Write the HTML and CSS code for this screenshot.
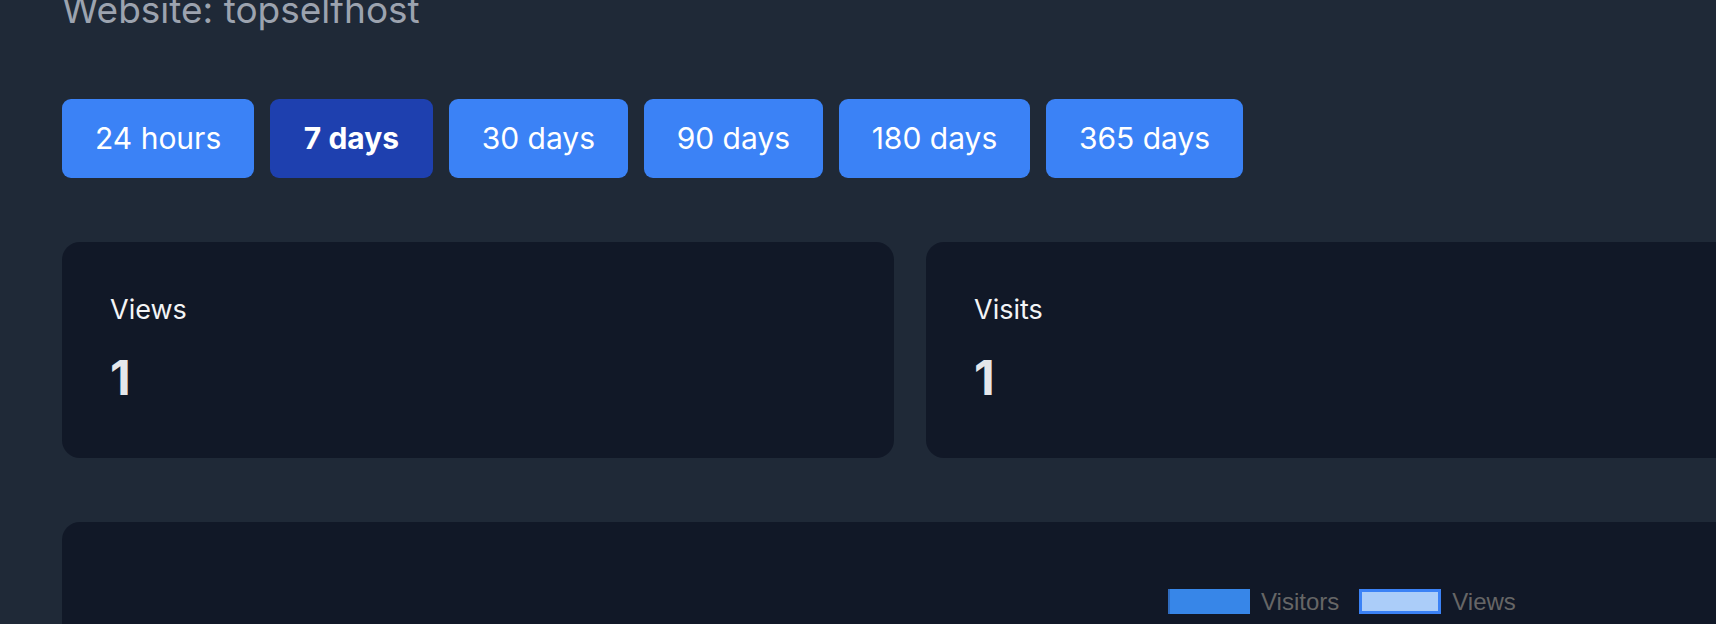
FILE: index.html
```html
<!DOCTYPE html>
<html>
<head>
<meta http-equiv="Content-Type" content="text/html; charset=utf-8">
<title>topselfhost - stats</title>
<link rel="stylesheet" href="styles.css">
</head>
<body>
<div id="page">
  <h1 class="site-title">Website: topselfhost</h1>

  <div class="ranges">
    <button class="range">24 hours</button>
    <button class="range active">7 days</button>
    <button class="range">30 days</button>
    <button class="range">90 days</button>
    <button class="range">180 days</button>
    <button class="range">365 days</button>
  </div>

  <div class="totals">
    <div class="card stat">
      <div class="stat-label">Views</div>
      <div class="stat-value">1</div>
    </div>
    <div class="card stat">
      <div class="stat-label">Visits</div>
      <div class="stat-value">1</div>
    </div>
  </div>

  <div class="card chart">
    <div class="legend">
      <span class="swatch visitors"></span><span class="legend-text">Visitors</span>
      <span class="swatch views"></span><span class="legend-text">Views</span>
    </div>
  </div>
</div>
</body>
</html>
```

FILE: styles.css
```css
html, body { overflow: hidden; }
body {
  margin: 0;
  background-color: #1f2937;
  font-family: Inter, "Noto Sans", sans-serif;
  color: #f3f4f6;
}
#page {
  width: 1696px;
  padding-left: 62px;
}

.site-title {
  margin: -14px 0 0 0;
  font-size: 37px;
  line-height: 48px;
  font-weight: 400;
  color: #9ca3af;
}

/* time range picker */
.ranges {
  display: flex;
  gap: 15.6px;
  margin-top: 65px;
}
.range {
  border: none;
  border-radius: 9px;
  padding: 18px 33px 19px 33px;
  font-family: Inter, sans-serif;
  font-size: 30px;
  line-height: 42px;
  color: white;
  background-color: #3b82f6;
}
.range.active { background-color: #1e40af; font-weight: 700; padding-left: 34px; padding-right: 34px; }

.card {
  background-color: #111827;
  border-radius: 18px;
  padding: 48px;
  box-sizing: border-box;
}

/* totals */
.totals {
  display: flex;
  gap: 32px;
  margin-top: 64px;
}
.stat { width: 832px; height: 216px; }
.stat-label { font-size: 27px; line-height: 40px; color: #f3f4f6; }
.stat-value {
  margin-top: 18px;
  font-size: 48px;
  line-height: 60px;
  font-weight: 700;
  color: #e5e7eb;
}

/* chart */
.chart {
  margin-top: 64px;
  width: 1696px;
  height: 300px;
}
.legend {
  display: flex;
  align-items: center;
  margin-top: 19px;
  margin-left: 1058px;
  font-family: "Liberation Sans", Arial, sans-serif;
  font-size: 24px;
  color: #666666;
}
.swatch {
  width: 82px;
  height: 25px;
  box-sizing: border-box;
  margin-right: 11px;
}
.swatch.visitors { background-color: #3786e8; border-left: 2px solid #2f6cc0; }
.swatch.views { background-color: #abcdf9; border: 3px solid #3b82f6; margin-left: 20px; }
.legend-text { line-height: 25px; }
```
